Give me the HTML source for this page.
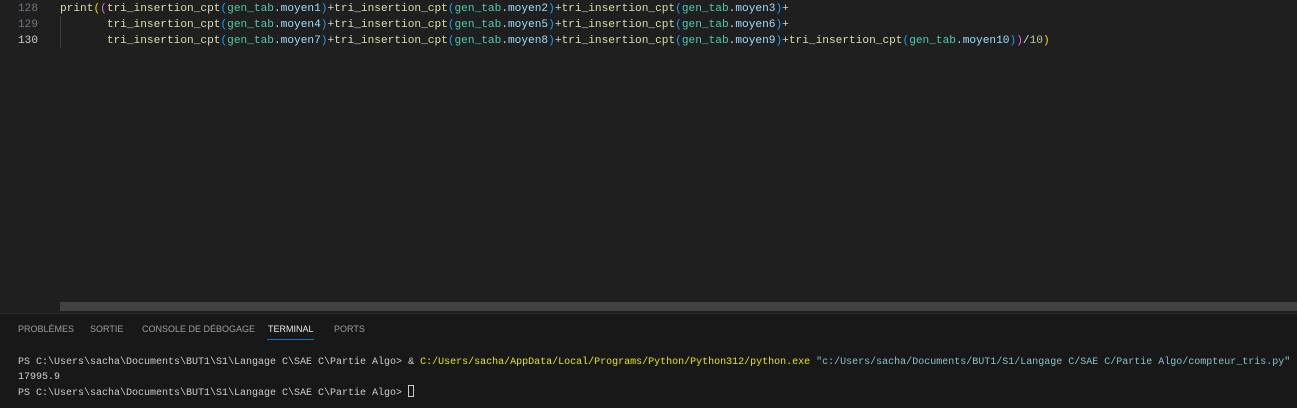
<!DOCTYPE html>
<html><head><meta charset="utf-8"><style>
body{margin:0;width:1297px;height:407px;background:#1f1f1f;overflow:hidden;position:relative;font-family:"Liberation Mono",monospace}
.ln{position:absolute;left:0;width:38px;text-align:right;color:#6e7681;font-size:11.1px;line-height:16px}
.code{position:absolute;left:60px;font-size:11.15px;line-height:16px;white-space:pre;color:#d4d4d4}
.f{color:#dcdcaa}.c{color:#4ec9b0}.v{color:#9cdcfe}.y{color:#ffd700}.p{color:#da70d6}.b{color:#179fff}.n{color:#b5cea8}
.guide{position:absolute;left:60px;width:1px;background:#404040}
.panel{position:absolute;left:0;top:313px;width:1297px;height:94px;background:#181818;border-top:1px solid #2b2b2b}
.tab{position:absolute;top:10px;font-family:"Liberation Sans",sans-serif;font-size:9px;color:#9d9d9d}
.term{position:absolute;left:18px;font-size:10px;line-height:14.5px;white-space:pre;color:#cccccc}
</style></head><body>
<div class="ln" style="top:1px">128</div>
<div class="ln" style="top:17px">129</div>
<div class="ln" style="top:33px;color:#ccc">130</div>
<div class="guide" style="top:16px;height:32px"></div>
<div class="code" style="top:1px"><span class="f">print</span><span class="y">(</span><span class="p">(</span><span class="f">tri_insertion_cpt</span><span class="b">(</span><span class="c">gen_tab</span>.<span class="v">moyen1</span><span class="b">)</span>+<span class="f">tri_insertion_cpt</span><span class="b">(</span><span class="c">gen_tab</span>.<span class="v">moyen2</span><span class="b">)</span>+<span class="f">tri_insertion_cpt</span><span class="b">(</span><span class="c">gen_tab</span>.<span class="v">moyen3</span><span class="b">)</span>+</div>
<div class="code" style="top:17px">       <span class="f">tri_insertion_cpt</span><span class="b">(</span><span class="c">gen_tab</span>.<span class="v">moyen4</span><span class="b">)</span>+<span class="f">tri_insertion_cpt</span><span class="b">(</span><span class="c">gen_tab</span>.<span class="v">moyen5</span><span class="b">)</span>+<span class="f">tri_insertion_cpt</span><span class="b">(</span><span class="c">gen_tab</span>.<span class="v">moyen6</span><span class="b">)</span>+</div>
<div class="code" style="top:33px">       <span class="f">tri_insertion_cpt</span><span class="b">(</span><span class="c">gen_tab</span>.<span class="v">moyen7</span><span class="b">)</span>+<span class="f">tri_insertion_cpt</span><span class="b">(</span><span class="c">gen_tab</span>.<span class="v">moyen8</span><span class="b">)</span>+<span class="f">tri_insertion_cpt</span><span class="b">(</span><span class="c">gen_tab</span>.<span class="v">moyen9</span><span class="b">)</span>+<span class="f">tri_insertion_cpt</span><span class="b">(</span><span class="c">gen_tab</span>.<span class="v">moyen10</span><span class="b">)</span><span class="p">)</span>/<span class="n">10</span><span class="y">)</span></div>
<div style="position:absolute;left:60px;top:302px;width:1237px;height:9px;background:#424242"></div>
<div class="panel">
<div class="tab" style="left:18px">PROBLÈMES</div>
<div class="tab" style="left:90px">SORTIE</div>
<div class="tab" style="left:142px">CONSOLE DE DÉBOGAGE</div>
<div class="tab" style="left:268px;color:#e7e7e7">TERMINAL</div>
<div style="position:absolute;left:267px;top:25px;width:47px;height:1px;background:#0078d4"></div>
<div class="tab" style="left:334px">PORTS</div>
<div class="term" style="top:42px">PS C:\Users\sacha\Documents\BUT1\S1\Langage C\SAE C\Partie Algo&gt; &amp; <span style="color:#e5e510">C:/Users/sacha/AppData/Local/Programs/Python/Python312/python.exe</span> <span style="color:#88c0d0">"c:/Users/sacha/Documents/BUT1/S1/Langage C/SAE C/Partie Algo/compteur_tris.py"</span>
17995.9
PS C:\Users\sacha\Documents\BUT1\S1\Langage C\SAE C\Partie Algo&gt; <span style="display:inline-block;width:6px;height:12px;border:1px solid #ccc;box-sizing:border-box;vertical-align:-2px"></span></div>
</div>
</body></html>
